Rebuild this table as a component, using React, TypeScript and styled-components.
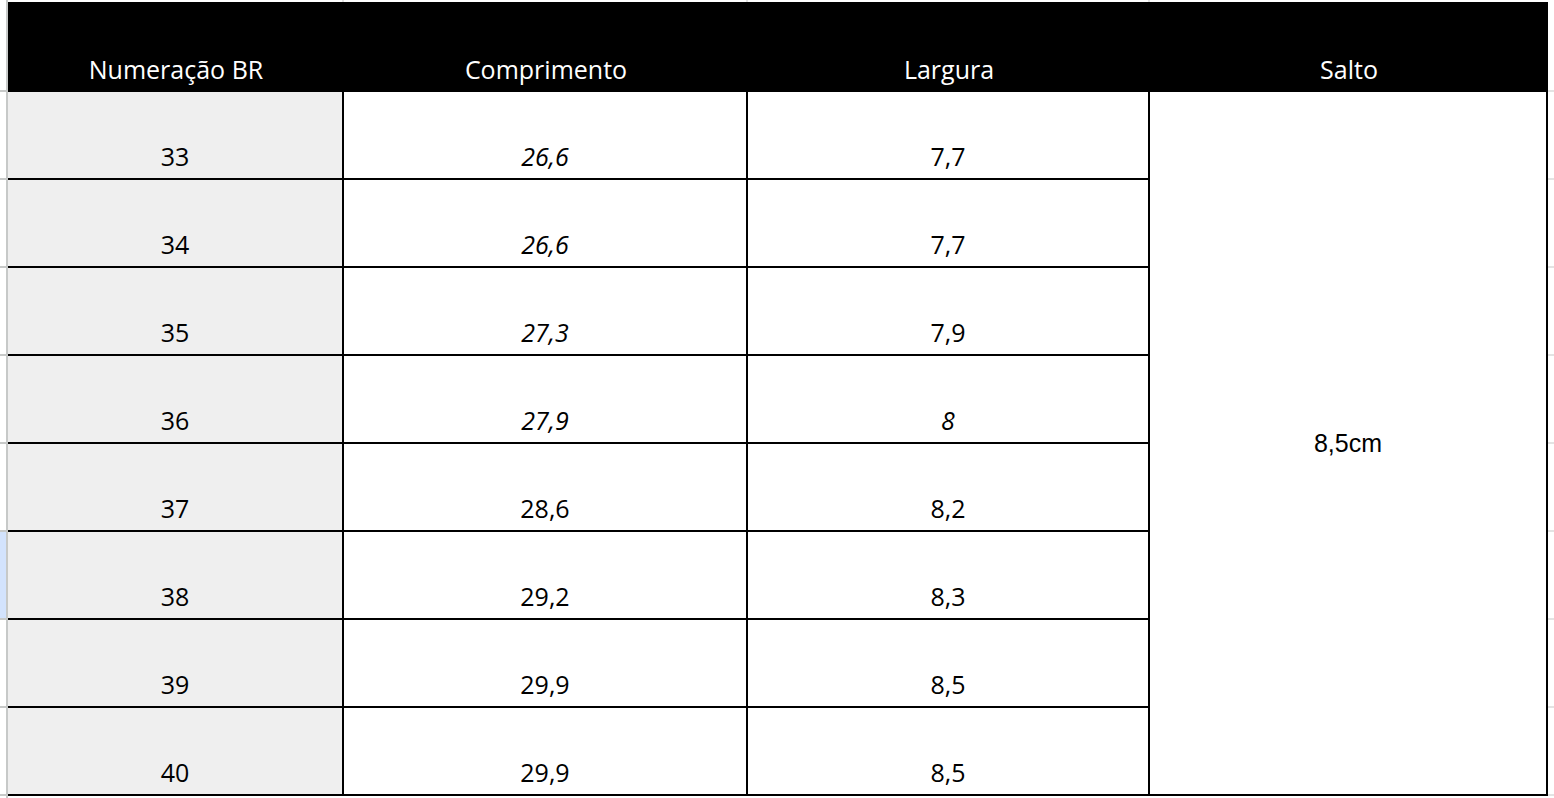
import React from 'react';
import styled, { createGlobalStyle } from 'styled-components';

const GlobalStyle = createGlobalStyle`
  html, body {
    margin: 0;
    padding: 0;
    background: #ffffff;
  }
  body {
    font-family: "Open Sans", "Noto Sans", sans-serif;
    overflow: hidden;
  }
`;

type SizeRow = {
  size: string;
  length: string;
  lengthItalic?: boolean;
  width: string;
  widthItalic?: boolean;
};

const rows: SizeRow[] = [
  { size: '33', length: '26,6', lengthItalic: true, width: '7,7' },
  { size: '34', length: '26,6', lengthItalic: true, width: '7,7' },
  { size: '35', length: '27,3', lengthItalic: true, width: '7,9' },
  { size: '36', length: '27,9', lengthItalic: true, width: '8', widthItalic: true },
  { size: '37', length: '28,6', width: '8,2' },
  { size: '38', length: '29,2', width: '8,3' },
  { size: '39', length: '29,9', width: '8,5' },
  { size: '40', length: '29,9', width: '8,5' },
];

const headers = ['Numeração BR', 'Comprimento', 'Largura', 'Salto'];
const SELECTED_ROW = 5;

export default function App() {
  return (
    <>
      <GlobalStyle />
      <Sheet>
        <Gutter $side="left">
          <GutterCell $head />
          {rows.map((r, i) => (
            <GutterCell key={r.size} $active={i === SELECTED_ROW} />
          ))}
        </Gutter>

        <Main>
          <TopStrip>
            <TopCell />
            <TopCell />
            <TopCell />
            <TopCell $last />
          </TopStrip>

          <Table>
            {headers.map((h) => (
              <HeadCell key={h}>{h}</HeadCell>
            ))}

            <MergedCell>8,5cm</MergedCell>

            {rows.map((r) => (
              <React.Fragment key={r.size}>
                <Cell $shaded>{r.size}</Cell>
                <Cell $italic={r.lengthItalic}>{r.length}</Cell>
                <Cell $italic={r.widthItalic}>{r.width}</Cell>
              </React.Fragment>
            ))}
          </Table>
        </Main>

        <Gutter $side="right">
          <GutterCell $head $light />
          {rows.map((r) => (
            <GutterCell key={r.size} $light />
          ))}
        </Gutter>
      </Sheet>
    </>
  );
}

const Sheet = styled.div`
  display: flex;
  width: 1554px;
  height: 798px;
  overflow: hidden;
`;

const Gutter = styled.div<{ $side: 'left' | 'right' }>`
  display: flex;
  flex-direction: column;
  flex: ${(p) => (p.$side === 'left' ? '0 0 6px' : '1 1 auto')};
  border-right: ${(p) => (p.$side === 'left' ? '2px solid #c7c9c8' : 'none')};
`;

const GutterCell = styled.div<{ $head?: boolean; $active?: boolean; $light?: boolean }>`
  box-sizing: border-box;
  height: ${(p) => (p.$head ? '92px' : '88px')};
  flex: 0 0 auto;
  background: ${(p) => (p.$active ? '#d3e3fd' : '#ffffff')};
  border-bottom: 2px solid ${(p) => (p.$light ? '#e3e3e3' : '#c7c9c8')};
`;

const Main = styled.div`
  display: flex;
  flex-direction: column;
  flex: 0 0 auto;
`;

const TopStrip = styled.div`
  display: grid;
  grid-template-columns: 336px 404px 402px 398px;
  height: 2px;
`;

const TopCell = styled.div<{ $last?: boolean }>`
  box-sizing: border-box;
  border-right: 2px solid ${(p) => (p.$last ? 'transparent' : '#e3e3e3')};
`;

const Table = styled.div`
  display: grid;
  grid-template-columns: 336px 404px 402px 398px;
  grid-template-rows: 90px repeat(8, 88px);
  color: #000000;
`;

const HeadCell = styled.div`
  display: flex;
  align-items: flex-end;
  justify-content: center;
  padding-bottom: 7px;
  box-sizing: border-box;
  background: #000000;
  color: #ffffff;
  font-size: 25px;
  line-height: 32px;
`;

const Cell = styled.div<{ $shaded?: boolean; $italic?: boolean }>`
  display: flex;
  align-items: flex-end;
  justify-content: center;
  box-sizing: border-box;
  padding-bottom: 6px;
  background: ${(p) => (p.$shaded ? '#efefef' : '#ffffff')};
  border-right: 2px solid #000000;
  border-bottom: 2px solid #000000;
  font-size: 25px;
  line-height: 32px;
  font-style: ${(p) => (p.$italic ? 'italic' : 'normal')};
`;

const MergedCell = styled.div`
  grid-column: 4;
  grid-row: 2 / span 8;
  display: flex;
  align-items: center;
  justify-content: center;
  box-sizing: border-box;
  background: #ffffff;
  border-right: 2px solid #000000;
  border-bottom: 2px solid #000000;
  font-family: "Liberation Sans", Arial, sans-serif;
  font-size: 25px;
`;
